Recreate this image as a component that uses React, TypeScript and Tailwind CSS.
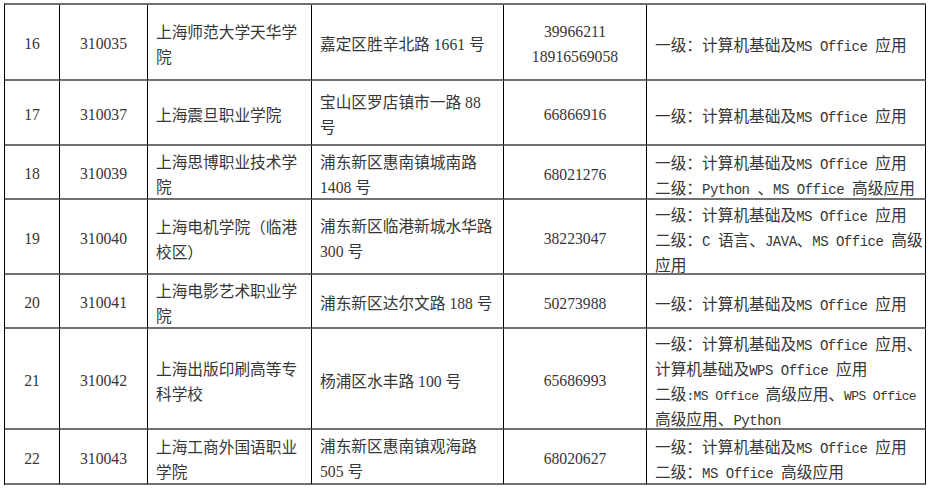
import React from 'react';

type Line = string | { t: string; tight: boolean };

interface Row {
  no: string;
  code: string;
  name: string[];
  addr: string[];
  tel: string[];
  levels: Line[];
}

const ROWS: Row[] = [
  {
    no: '16',
    code: '310035',
    name: ['上海师范大学天华学', '院'],
    addr: ['嘉定区胜辛北路 1661 号'],
    tel: ['39966211', '18916569058'],
    levels: ['一级：计算机基础及MS Office 应用'],
  },
  {
    no: '17',
    code: '310037',
    name: ['上海震旦职业学院'],
    addr: ['宝山区罗店镇市一路 88', '号'],
    tel: ['66866916'],
    levels: ['一级：计算机基础及MS Office 应用'],
  },
  {
    no: '18',
    code: '310039',
    name: ['上海思博职业技术学', '院'],
    addr: ['浦东新区惠南镇城南路', '1408 号'],
    tel: ['68021276'],
    levels: ['一级：计算机基础及MS Office 应用', '二级：Python 、MS Office 高级应用'],
  },
  {
    no: '19',
    code: '310040',
    name: ['上海电机学院（临港', '校区）'],
    addr: ['浦东新区临港新城水华路', '300 号'],
    tel: ['38223047'],
    levels: ['一级：计算机基础及MS Office 应用', '二级：C 语言、JAVA、MS Office 高级', '应用'],
  },
  {
    no: '20',
    code: '310041',
    name: ['上海电影艺术职业学', '院'],
    addr: ['浦东新区达尔文路 188 号'],
    tel: ['50273988'],
    levels: ['一级：计算机基础及MS Office 应用'],
  },
  {
    no: '21',
    code: '310042',
    name: ['上海出版印刷高等专', '科学校'],
    addr: ['杨浦区水丰路 100 号'],
    tel: ['65686993'],
    levels: [
      '一级：计算机基础及MS Office 应用、',
      '计算机基础及WPS Office 应用',
      { t: '二级:MS Office 高级应用、WPS Office', tight: true },
      '高级应用、Python',
    ],
  },
  {
    no: '22',
    code: '310043',
    name: ['上海工商外国语职业', '学院'],
    addr: ['浦东新区惠南镇观海路', '505 号'],
    tel: ['68020627'],
    levels: ['一级：计算机基础及MS Office 应用', '二级：MS Office 高级应用'],
  },
];

const ROW_H = ['h-[76px]', 'h-[65px]', 'h-[54px]', 'h-[75px]', 'h-[54px]', 'h-[101px]', 'h-[55px]'];

// ascii runs in the level column are set in a narrow mono, like the half-width latin of a song font
function LevelLine({ line }: { line: Line }) {
  const text = typeof line === 'string' ? line : line.t;
  const tight = typeof line !== 'string' && line.tight;
  const parts = text.split(/([\x20-\x7e]+)/).filter(Boolean);
  return (
    <div className="h-[25px] whitespace-pre">
      {parts.map((p, i) =>
        /^[\x20-\x7e]+$/.test(p) ? (
          <span
            key={i}
            className={`font-['Liberation_Mono',monospace] leading-none ${
              tight ? 'text-[13px] tracking-[-0.6px]' : 'text-[14px] tracking-[-0.5px]'
            }`}
          >
            {p}
          </span>
        ) : (
          <span key={i}>{p}</span>
        ),
      )}
    </div>
  );
}

const cell = 'flex border-r border-black border-b-2 border-b-[#707070]';

export default function App() {
  return (
    <div className="min-h-screen bg-white pt-[3px] pl-1 text-[#363636] font-['Liberation_Serif','Noto_Sans_CJK_SC',serif] text-[15.7px] leading-[25px]">
      <div className="w-fit border-t-2 border-t-[#707070] border-l border-l-black grid grid-cols-[55px_88px_164px_192px_143px_279px]">
        {ROWS.map((r, i) => (
          <React.Fragment key={r.no}>
            <div className={`${cell} ${ROW_H[i]} items-center justify-center pt-[3px]`}>{r.no}</div>
            <div className={`${cell} ${ROW_H[i]} items-center justify-center pt-[3px]`}>{r.code}</div>
            <div className={`${cell} ${ROW_H[i]} flex-col justify-center pl-2 pt-[6px] whitespace-pre`}>
              {r.name.map((l) => (
                <div key={l}>{l}</div>
              ))}
            </div>
            <div className={`${cell} ${ROW_H[i]} flex-col justify-center pl-2 pt-[5px] whitespace-pre`}>
              {r.addr.map((l) => (
                <div key={l}>{l}</div>
              ))}
            </div>
            <div className={`${cell} ${ROW_H[i]} flex-col items-center justify-center pt-[4px]`}>
              {r.tel.map((l) => (
                <div key={l}>{l}</div>
              ))}
            </div>
            <div className={`${cell} ${ROW_H[i]} flex-col justify-center pl-2 pt-[5px] font-['Noto_Sans_CJK_SC',sans-serif]`}>
              {r.levels.map((l, j) => (
                <LevelLine key={j} line={l} />
              ))}
            </div>
          </React.Fragment>
        ))}
      </div>
    </div>
  );
}
